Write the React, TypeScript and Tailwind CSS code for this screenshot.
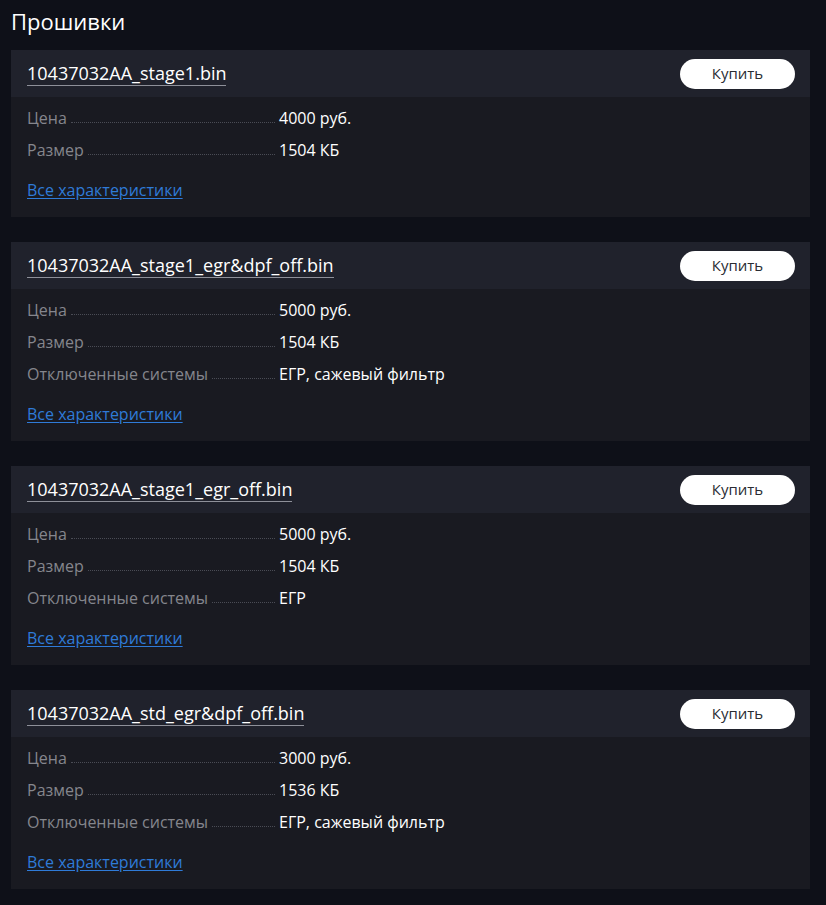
import React from "react";

type Firmware = {
  name: string;
  price: string;
  size: string;
  disabled?: string;
};

const items: Firmware[] = [
  { name: "10437032AA_stage1.bin", price: "4000 руб.", size: "1504 КБ" },
  { name: "10437032AA_stage1_egr&dpf_off.bin", price: "5000 руб.", size: "1504 КБ", disabled: "ЕГР, сажевый фильтр" },
  { name: "10437032AA_stage1_egr_off.bin", price: "5000 руб.", size: "1504 КБ", disabled: "ЕГР" },
  { name: "10437032AA_std_egr&dpf_off.bin", price: "3000 руб.", size: "1536 КБ", disabled: "ЕГР, сажевый фильтр" },
];

export default function App() {
  return (
    <div className="min-h-[905px] bg-[#0e1018] px-[11px] pt-[4px] pb-4 font-['Open_Sans',sans-serif]">
      <h1 className="text-[22px] leading-[34px] text-white">Прошивки</h1>
      <div className="mt-[12px] space-y-[25px] pr-[5px]">
        {items.map((f) => (
          <FirmwareCard key={f.name} item={f} />
        ))}
      </div>
    </div>
  );
}

function FirmwareCard({ item }: { item: Firmware }) {
  return (
    <section className="bg-[#191a21]">
      {/* заголовок */}
      <div className="flex h-[47px] items-center justify-between bg-[#20222c] pl-4 pr-[15px]">
        <span className="border-b border-[#8e9099] text-[18px] leading-[24px] text-white">{item.name}</span>
        <button className="h-[30px] w-[115px] rounded-full bg-white text-[15px] text-[#2a2c33]">Купить</button>
      </div>
      {/* характеристики */}
      <div className="px-4 pt-[11px] pb-[17px]">
        <div className="space-y-[12px]">
          <Row label="Цена" value={item.price} />
          <Row label="Размер" value={item.size} />
          {item.disabled ? <Row label="Отключенные системы" value={item.disabled} /> : null}
        </div>
        <a href="#" className="mt-[20px] block w-fit text-[16px] leading-[20px] text-[#2f7bd8] underline underline-offset-2">
          Все характеристики
        </a>
      </div>
    </section>
  );
}

function Row({ label, value }: { label: string; value: string }) {
  return (
    <div className="flex h-[20px] items-end text-[16px] leading-[20px]">
      <div className="flex w-[248px] items-end">
        <span className="text-[#85868d]">{label}</span>
        <span className="mb-[5px] ml-[4px] flex-1 border-b border-dotted border-[#4a4c55]" />
      </div>
      <span className="ml-[4px] font-medium text-white">{value}</span>
    </div>
  );
}
